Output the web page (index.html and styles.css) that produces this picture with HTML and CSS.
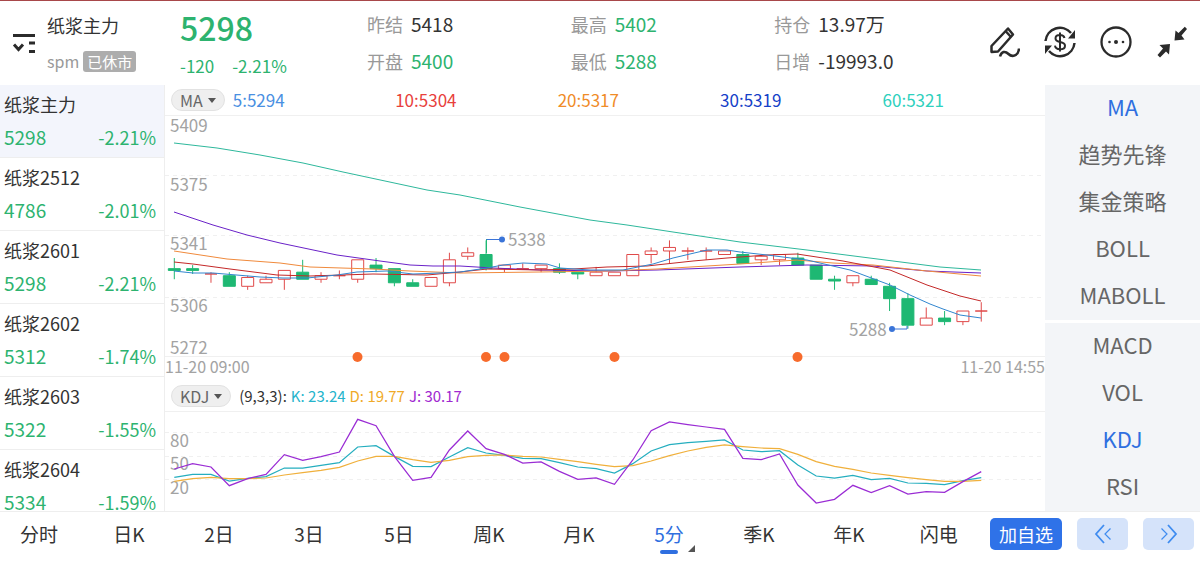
FILE: index.html
```html
<!DOCTYPE html>
<html lang="zh-CN">

<head>
    <meta charset="UTF-8">
    <meta name="viewport" content="width=device-width, initial-scale=1">
    <title>纸浆主力</title>
    <link rel="stylesheet" href="styles.css">
</head>

<body>
    <header class="header">
        <button class="icon-btn list-btn" aria-label="列表">
            <svg width="24" height="24" viewBox="0 0 24 24" fill="none" stroke="#2b2b2b" stroke-width="3">
                <path d="M1 4.500h22M17 12h6M17 20.500h6" />
                <path d="M2 13.500l4.500 5 4.500-5" />
            </svg>
        </button>
        <div class="contract">
            <div class="contract-name">纸浆主力</div>
            <div class="contract-code">spm <span class="badge">已休市</span></div>
        </div>
        <div class="last">
            <div class="last-price">5298</div>
            <div class="last-change"><span>-120</span><span>-2.21%</span></div>
        </div>
        <dl class="quotes">
            <div><dt>昨结</dt><dd>5418</dd></div>
            <div><dt>最高</dt><dd class="down">5402</dd></div>
            <div><dt>持仓</dt><dd>13.97万</dd></div>
            <div><dt>开盘</dt><dd class="down">5400</dd></div>
            <div><dt>最低</dt><dd class="down">5288</dd></div>
            <div><dt>日增</dt><dd>-19993.0</dd></div>
        </dl>
        <div class="tools">
            <button class="icon-btn" aria-label="画线">
                <svg width="32" height="32" viewBox="0 0 32 32" fill="none" stroke="#2b2b2b" stroke-width="2.500">
                    <path d="M3.500 26V20L20 2.500L25 8.500L10 25.500z" stroke-linejoin="round" />
                    <path d="M17.500 5l5.500 6" />
                    <path d="M12 30.500c1.500-5 5-6 8.500-2.500s10 2 10.500-5.500" />
                </svg>
            </button>
            <button class="icon-btn" aria-label="交易">
                <svg width="32" height="32" viewBox="0 0 32 32" fill="none" stroke="#2b2b2b" stroke-width="2.500">
                    <path d="M1.500 15A14.500 14.500 0 0 1 27 7M30.500 17A14.500 14.500 0 0 1 5 25" />
                    <path d="M31 4v8.500h-7zM1 28v-8.500h7z" fill="#2b2b2b" stroke="none" />
                    <path d="M20.500 12c-.5-2-2-3-4.500-3s-4.500 1-4.500 3.300S13.500 15.500 16 16s5 1.200 5 3.700-2 3.600-5 3.600-4.700-1.300-5-3.600M16 6.500v19" stroke-width="2" />
                </svg>
            </button>
            <button class="icon-btn" aria-label="更多">
                <svg width="32" height="32" viewBox="0 0 32 32" fill="#2b2b2b">
                    <circle cx="16" cy="16" r="14.500" fill="none" stroke="#2b2b2b" stroke-width="2.300" />
                    <circle cx="9.500" cy="16" r="1.300" />
                    <circle cx="16" cy="16" r="2" />
                    <circle cx="23" cy="16" r="1.300" />
                </svg>
            </button>
            <button class="icon-btn" aria-label="退出全屏">
                <svg width="32" height="32" viewBox="0 0 32 32" fill="#2b2b2b">
                    <path d="M31 3L28.800 .8L22.500 7L19.500 4.500L18.500 14.500L28.500 13.500L25.500 9.500z" />
                    <path d="M1.500 29L4 31.500L10 25.500L13 28.500L14 18L3.500 19L7 22.500z" />
                </svg>
            </button>
        </div>
    </header>

    <main class="main">
        <nav class="contracts">
            <a href="#" class="contract-row active"><b>纸浆主力</b><span>5298</span><em>-2.21%</em></a>
            <a href="#" class="contract-row"><b>纸浆2512</b><span>4786</span><em>-2.01%</em></a>
            <a href="#" class="contract-row"><b>纸浆2601</b><span>5298</span><em>-2.21%</em></a>
            <a href="#" class="contract-row"><b>纸浆2602</b><span>5312</span><em>-1.74%</em></a>
            <a href="#" class="contract-row"><b>纸浆2603</b><span>5322</span><em>-1.55%</em></a>
            <a href="#" class="contract-row"><b>纸浆2604</b><span>5334</span><em>-1.59%</em></a>
        </nav>

        <section class="charts">
            <div class="legend">
                <button class="pill">MA <i class="caret"></i></button>
                <div class="ma-values">
                    <span class="ma5">5:5294</span>
                    <span class="ma10">10:5304</span>
                    <span class="ma20">20:5317</span>
                    <span class="ma30">30:5319</span>
                    <span class="ma60">60:5321</span>
                </div>
            </div>
            <svg class="price-chart" id="price-chart" viewBox="165 115 880 266">
                <path class="frame" d="M165 115.500h880M165 356.500h880" />
                <path class="grid" d="M165 175.500h880M165 235.500h880M165 297.500h880" />
                <g id="candles"></g>
                <g id="averages"></g>
                <g class="marker">
                    <path d="M486.500 253v-14" class="marker-wick" />
                    <path d="M486.500 239.500h15M907 326v3h-15" />
                    <circle cx="502" cy="239.500" r="3" />
                    <circle cx="892" cy="329" r="3" />
                </g>
                <g class="axis">
                    <text x="170" y="132">5409</text>
                    <text x="170" y="191">5375</text>
                    <text x="170" y="250">5341</text>
                    <text x="170" y="312">5306</text>
                    <text x="170" y="354">5272</text>
                    <text x="508" y="246">5338</text>
                    <text x="849" y="336">5288</text>
                    <text x="165" y="373" class="time">11-20 09:00</text>
                    <text x="1045" y="373" class="time" text-anchor="end">11-20 14:55</text>
                </g>
                <g class="events">
                    <circle cx="357.500" cy="357" r="5" />
                    <circle cx="486" cy="357" r="5" />
                    <circle cx="504.500" cy="357" r="5" />
                    <circle cx="614.500" cy="357" r="5" />
                    <circle cx="797.500" cy="357" r="5" />
                </g>
            </svg>
            <div class="legend">
                <button class="pill">KDJ <i class="caret"></i></button>
                <div class="kdj-values">
                    <span>(9,3,3):</span>
                    <span class="k">K: 23.24</span>
                    <span class="d">D: 19.77</span>
                    <span class="j">J: 30.17</span>
                </div>
            </div>
            <svg class="kdj-chart" viewBox="165 411 880 100">
                <path class="frame" d="M165 411.500h880" />
                <path class="grid" d="M165 432.500h880M165 456.500h880M165 479.500h880" />
                <g class="axis">
                    <text x="170" y="447">80</text>
                    <text x="170" y="470">50</text>
                    <text x="170" y="494">20</text>
                </g>
                <g id="kdj"></g>
            </svg>
        </section>

        <aside class="indicators">
            <div class="indicator-group">
                <button class="active">MA</button>
                <button>趋势先锋</button>
                <button>集金策略</button>
                <button>BOLL</button>
                <button>MABOLL</button>
            </div>
            <div class="indicator-group">
                <button>MACD</button>
                <button>VOL</button>
                <button class="active">KDJ</button>
                <button>RSI</button>
            </div>
        </aside>
    </main>

    <footer class="footer">
        <nav class="periods">
            <button>分时</button>
            <button>日K</button>
            <button>2日</button>
            <button>3日</button>
            <button>5日</button>
            <button>周K</button>
            <button>月K</button>
            <button class="active">5分</button>
            <button>季K</button>
            <button>年K</button>
            <button>闪电</button>
        </nav>
        <div class="actions">
            <button class="add">加自选</button>
            <button class="page" aria-label="上一个">
                <svg width="20" height="20" viewBox="0 0 20 20" fill="none" stroke="#3f8cf0" stroke-width="1.800">
                    <path d="M11 1L3 10l8 9" />
                    <path d="M17.500 4.500L12 10l5.500 5.500" stroke-width="1.200" />
                </svg>
            </button>
            <button class="page" aria-label="下一个">
                <svg width="20" height="20" viewBox="0 0 20 20" fill="none" stroke="#3f8cf0" stroke-width="1.800">
                    <path d="M9 1l8 9-8 9" />
                    <path d="M2.500 4.500L8 10l-5.500 5.500" stroke-width="1.200" />
                </svg>
            </button>
        </div>
    </footer>

    <script src="chart.js"></script>
</body>

</html>
```
FILE: styles.css
```css
* {
    box-sizing: border-box;
}

body {
    display: flex;
    flex-direction: column;
    height: 100vh;
    margin: 0;
    border-top: 1px solid #a8484a;
    background: #fff;
    color: #333;
    font-family: "Noto Sans CJK SC", sans-serif;
    font-size: 18px;
    line-height: 24px;
    overflow: hidden;
}

button {
    padding: 0;
    border: none;
    background: none;
    color: inherit;
    font: inherit;
    cursor: pointer;
}

svg {
    display: block;
}

.down {
    color: #2db36f;
}

/* header */
.header {
    display: flex;
    flex: none;
    height: 84px;
    padding-left: 12px;
}

.list-btn {
    align-self: center;
}

.contract {
    width: 133px;
    margin-left: 11px;
    padding-top: 12px;
}

.contract-code {
    display: flex;
    align-items: center;
    gap: 4px;
    margin-top: 12px;
    color: #999;
    font-size: 16px;
}

.badge {
    padding: 0 4px;
    border-radius: 3px;
    background: #adadad;
    color: #fff;
    font-size: 15px;
    line-height: 21px;
}

.last {
    width: 187px;
    color: #2db36f;
}

.last-price {
    margin-top: 8px;
    font-size: 32px;
    font-weight: 500;
    line-height: 36px;
}

.last-change {
    display: flex;
    gap: 18px;
    margin-top: 9px;
    font-size: 17px;
}

.quotes {
    display: grid;
    flex: 1;
    grid-template-columns: repeat(3, 1fr);
    align-content: start;
    gap: 13px 0;
    margin: 0;
    padding-top: 11px;
}

.quotes div {
    display: flex;
    gap: 8px;
}

.quotes dt {
    color: #999;
}

.quotes dd {
    margin: 0;
    font-size: 19px;
}

.tools {
    display: flex;
    align-items: center;
    gap: 24px;
    padding: 0 12px 2px 10px;
}

/* body */
.main {
    display: flex;
    flex: 1;
    min-height: 0;
    overflow: hidden;
}

.contracts {
    width: 165px;
    border-right: 1px solid #eee;
    overflow: hidden;
}

.contract-row {
    display: grid;
    grid-template-columns: 1fr auto;
    gap: 9px 0;
    height: 73px;
    padding: 7px 8px 0 4px;
    border-bottom: 1px solid #eee;
    color: #2db36f;
    text-decoration: none;
    align-content: start;
}

.contract-row.active {
    background: #f3f5fc;
}

.contract-row b {
    grid-column: 1 / 3;
    color: #333;
    font-weight: 400;
}

.contract-row span {
    font-size: 19px;
}

.contract-row em {
    font-style: normal;
}

.charts {
    display: flex;
    flex: 1;
    flex-direction: column;
    min-width: 0;
}

.legend {
    display: flex;
    flex: none;
    align-items: center;
    gap: 8px;
    height: 30px;
    padding-left: 6px;
}

.pill {
    display: flex;
    align-items: center;
    gap: 5px;
    height: 22px;
    padding: 0 8px;
    border: 1px solid #e2e2e2;
    border-radius: 11px;
    background: #efefef;
    color: #666;
    font-size: 16px;
}

.caret {
    border: 4px solid transparent;
    border-top: 5px solid #555;
    border-bottom: none;
}

.ma-values {
    display: grid;
    flex: 1;
    grid-template-columns: repeat(5, 1fr);
    font-size: 17px;
}

.kdj-values {
    display: flex;
    gap: 4px;
    font-size: 15px;
}

.ma5 { color: #4a90e2; }
.ma10 { color: #e8403c; }
.ma20 { color: #f08c28; }
.ma30 { color: #1440c8; }
.ma60 { color: #2ed0bd; }
.k { color: #25b4cc; }
.d { color: #f0aa28; }
.j { color: #a028d0; }

.price-chart {
    flex: 266 1 0;
    width: 100%;
    min-height: 0;
}

.kdj-chart {
    flex: 100 1 0;
    width: 100%;
    min-height: 0;
}

.frame {
    stroke: #f0f0f0;
}

.grid {
    stroke: #f0f0f0;
    stroke-dasharray: 4 4;
}

.axis {
    fill: #a3a3a3;
    font-size: 17px;
}

.time {
    font-size: 16px;
}

.events {
    fill: #f76b2c;
}

.marker path {
    fill: none;
    stroke: #3a74d8;
}

.marker .marker-wick {
    stroke: #1eb873;
}

.marker circle {
    fill: #3a74d8;
}

.candle-up {
    fill: none;
    stroke: #e04a4a;
}

.candle-down {
    fill: #1eb873;
    stroke: #1eb873;
}

.line {
    fill: none;
    stroke-width: 1;
}

.kdj-line {
    fill: none;
    stroke-width: 1.25;
}

/* indicator menu */
.indicators {
    display: flex;
    flex-direction: column;
    gap: 3px;
    width: 155px;
}

.indicator-group {
    display: flex;
    flex-direction: column;
    background: #f3f5f8;
    color: #666;
    font-size: 22px;
}

.indicator-group:last-child {
    flex: 1;
}

.indicator-group button {
    height: 47px;
    padding-bottom: 5px;
}

.indicator-group .active {
    color: #2f6fe0;
}

/* period tabs */
.footer {
    display: flex;
    flex: none;
    height: 61px;
    padding: 6px 6px 0 20px;
    border-top: 1px solid #eee;
}

.periods {
    display: flex;
    flex: 1;
    justify-content: space-between;
    height: 36px;
}

.periods button {
    position: relative;
    min-width: 38px;
    padding-bottom: 4px;
    font-size: 19px;
}

.periods .active {
    color: #2f6fe0;
}

.periods .active::before {
    content: "";
    position: absolute;
    bottom: 0;
    left: 10px;
    width: 18px;
    height: 4px;
    border-radius: 2px;
    background: #2f6fe0;
}

.periods .active::after {
    content: "";
    position: absolute;
    right: -7px;
    bottom: 2px;
    border-bottom: 7px solid #555;
    border-left: 7px solid transparent;
}

.actions {
    display: flex;
    gap: 15px;
    margin-left: 32px;
}

.actions button {
    display: flex;
    align-items: center;
    justify-content: center;
    height: 32px;
    border-radius: 5px;
}

.add {
    width: 72px;
    background: #2f72e8;
    color: #fff;
}

.page {
    width: 51px;
    background: #d5e3fa;
}
```
FILE: chart.js
```js
const STEP = 18.34;
const FIRST = 174.3;

function priceY(p) {
    return 115 + (5409 - p) * 1.766;
}

function add(parent, tag, attrs) {
    const el = document.createElementNS('http://www.w3.org/2000/svg', tag);
    for (const key in attrs) el.setAttribute(key, attrs[key]);
    document.getElementById(parent).appendChild(el);
}

// open, high, low, close
const candles = [
    [5322, 5328, 5316, 5321], [5322, 5324, 5319, 5321], [5319, 5320, 5314, 5319],
    [5318, 5320, 5312, 5312], [5312, 5318, 5310, 5317], [5314, 5318, 5314, 5316],
    [5316, 5321, 5310, 5321], [5320, 5327, 5316, 5316], [5316, 5320, 5314, 5318],
    [5318, 5321, 5316, 5318], [5316, 5327, 5314, 5327], [5324, 5328, 5320, 5322],
    [5322, 5322, 5312, 5314], [5314, 5316, 5312, 5312], [5312, 5317, 5312, 5317],
    [5314, 5331, 5312, 5327], [5329, 5334, 5327, 5331], [5330, 5338, 5321, 5322],
    [5322, 5324, 5320, 5324], [5322, 5325, 5322, 5322], [5322, 5324, 5320, 5324],
    [5322, 5325, 5319, 5320], [5320, 5320, 5316, 5319], [5318, 5323, 5318, 5320],
    [5318, 5320, 5318, 5320], [5318, 5330, 5318, 5330], [5330, 5334, 5325, 5332],
    [5332, 5338, 5325, 5334], [5332, 5334, 5327, 5332], [5332, 5334, 5327, 5332],
    [5330, 5332, 5330, 5332], [5330, 5332, 5325, 5325], [5327, 5330, 5324, 5329],
    [5327, 5330, 5324, 5330], [5328, 5331, 5324, 5324], [5324, 5324, 5316, 5316],
    [5316, 5318, 5310, 5315], [5314, 5318, 5312, 5318], [5316, 5318, 5313, 5313],
    [5312, 5314, 5298, 5305], [5305, 5308, 5288, 5290], [5290, 5300, 5290, 5294],
    [5294, 5298, 5290, 5292], [5292, 5298, 5290, 5298], [5298, 5303, 5292, 5298]
];

candles.forEach(([open, high, low, close], i) => {
    const x = FIRST + i * STEP;
    const top = priceY(Math.max(open, close));
    const bottom = priceY(Math.min(open, close));
    add('candles', 'path', {
        class: close < open ? 'candle-down' : 'candle-up',
        d: `M${x} ${priceY(high)}V${top}M${x} ${bottom}V${priceY(low)}M${x - 6} ${top}h12V${bottom}h-12z`
    });
});

const averages = {
    '#2eb89c': '174,143 217,148 260,155 303,163 343,172 427,190 460,195 520,207 590,220 627,225 673,232 740,242 807,250 893,261 940,267 981,270',
    '#6a22c8': '174,212 213,225 247,235 280,243 337,255 380,261 410,265 433,266 460,266 493,268 540,270 607,271 657,270 740,267 807,265 873,266 927,271 981,273',
    '#f08a3c': '174,251 227,259 280,263 310,267 373,269 410,271 460,273 540,272 607,271 657,269 707,266 740,264 797,260 833,263 873,265 927,271 981,276',
    '#c42828': '174,262 193,264 230,269 277,275 310,276 373,274 427,275 460,272 487,269 540,270 573,269 607,267 647,266 693,261 727,258 767,255 797,254 843,261 890,270 927,285 960,296 981,301',
    '#3186cf': '174,271 193,273 213,273 260,277 283,278 307,278 337,275 357,272 387,271 413,274 440,273 460,272 487,268 503,265 523,263 547,264 560,268 590,270 623,270 653,264 673,258 690,254 707,250 727,250 740,252 767,255 807,260 850,270 890,285 910,295 930,304 943,309 960,315 981,318'
};

for (const color in averages) {
    add('averages', 'polyline', { class: 'line', stroke: color, points: averages[color] });
}

const kdj = {
    '#25aebf': [307, 298, 298, 318, 310, 305, 279, 279, 271, 263, 216, 212, 244, 274, 275, 246, 218, 234, 241, 250, 251, 263, 276, 281, 294, 266, 228, 209, 203, 199, 195, 225, 230, 227, 270, 303, 309, 301, 314, 310, 324, 325, 329, 317, 308],
    '#f0b03c': [319, 311, 307, 311, 311, 309, 300, 293, 286, 277, 258, 244, 244, 254, 262, 256, 245, 241, 240, 244, 246, 253, 260, 268, 275, 272, 258, 242, 228, 217, 210, 215, 219, 221, 238, 260, 274, 283, 294, 301, 308, 314, 319, 319, 316],
    '#9a2cd4': [282, 266, 276, 332, 311, 298, 239, 256, 245, 231, 133, 152, 244, 316, 307, 225, 168, 221, 238, 264, 261, 289, 313, 309, 328, 255, 167, 141, 149, 156, 163, 250, 254, 237, 330, 384, 373, 331, 353, 332, 357, 350, 352, 320, 290]
};

for (const color in kdj) {
    const points = kdj[color].map((v, i) => `${FIRST + i * STEP},${375 + v / 3}`).join(' ');
    add('kdj', 'polyline', { class: 'kdj-line', stroke: color, points: points });
}
```
